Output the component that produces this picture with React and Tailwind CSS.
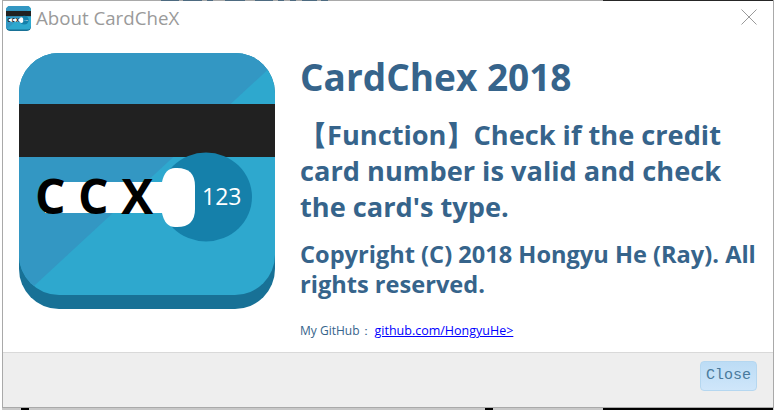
import React from "react";

// bits of the windows behind the dialog, [width, colour]
const topBits = [
  [159, "#a9a9a9"], [18, "#4d6a80"], [4, "#a9a9a9"], [19, "#4d6a80"], [5, "#a9a9a9"], [6, "#4d6a80"], [12, "#a9a9a9"], [20, "#4d6a80"],
  [10, "#a9a9a9"], [18, "#4d6a80"], [5, "#a9a9a9"], [6, "#4d6a80"], [6, "#a9a9a9"], [6, "#4d6a80"], [6, "#a9a9a9"], [15, "#4d6a80"],
  [4, "#a9a9a9"], [7, "#4d6a80"], [275, "#a9a9a9"], [170, "#262626"], [1, "#a9a9a9"],
];
const bottomBits = [
  [19, "#c8c8c8"], [8, "#000000"], [456, "#c8c8c8"], [8, "#000000"], [110, "#c8c8c8"], [170, "#000000"], [1, "#c8c8c8"],
];

const Strip = ({ bits, className }) => (
  <div className={`flex shrink-0 ${className}`}>
    {bits.map(([w, c], i) => (
      <div key={i} className="h-full" style={{ width: w, background: c }}></div>
    ))}
  </div>
);

const CardLogo = ({ size, small }) => (
  <svg width={size} height={size} viewBox="0 0 256 256" className="block shrink-0">
    <defs>
      <clipPath id={small ? "faceSmall" : "face"}>
        <rect x="0" y="0" width="256" height="242" rx="40" />
      </clipPath>
    </defs>
    <rect x="0" y="0" width="256" height="256" rx="40" fill="#187196" />
    <g clipPath={`url(#${small ? "faceSmall" : "face"})`}>
      <rect x="0" y="0" width="256" height="242" fill="#2ea8ce" />
      {/* darker diagonal */}
      <path d="M0 0H256V10L15 233L0 242Z" fill="#3397c3" />
    </g>
    <rect x="0" y="51" width="256" height="53" fill="#212121" />
    <ellipse cx="187" cy="144" rx="46" ry="44.5" fill="#1580aa" />
    <rect x="26" y="129" width="120" height="31" fill="#ffffff" />
    <path d="M156 115H158Q176 115 176 133V156Q176 174 158 174H156Q146 174 143 160V129Q146 115 156 115Z" fill="#ffffff" />
    <text x="183" y="152" fill="#ffffff" fontSize="23" fontFamily="'Open Sans', sans-serif">123</text>
    <text x="16" y="161" fill="#000000" fontSize="48" fontWeight="700" fontFamily="'Open Sans', sans-serif" letterSpacing="12.5">CCX</text>
  </svg>
);

export default function App() {
  return (
    <div className="w-[776px] h-[410px] bg-white font-['Open_Sans',sans-serif] pl-[2px] overflow-hidden flex flex-col">
      <Strip bits={topBits} className="h-[1px]" />
      <div className="w-[772px] h-[407px] shrink-0 flex flex-col border-x border-b border-[#a9a9a9] bg-white">
        {/* title bar */}
        <div className="h-[34px] flex items-center pl-[3px] pr-[16px] shrink-0">
          <div className="rounded-[4px] overflow-hidden">
            <CardLogo size={25} small />
          </div>
          <span className="ml-[5px] text-[18.7px] text-[#9a9a9a] leading-none">About CardCheX</span>
          <svg width="16" height="16" viewBox="0 0 16 16" className="ml-auto -mt-[2px]" fill="none" stroke="#9a9a9a" strokeWidth="1">
            <path d="M0.5 0.5L15.5 15.5M15.5 0.5L0.5 15.5" />
          </svg>
        </div>
        {/* content */}
        <div className="flex-1 flex pl-[16px] pt-[18px]">
          <CardLogo size={256} />
          <div className="ml-[25px] flex-1 text-[#36648b] font-bold">
            <h1 className="text-[37px] leading-[48px]">CardChex 2018</h1>
            <p className="text-[27.2px] leading-[36px] mt-[16px] w-[440px]">【Function】Check if the credit card number is valid and check the card's type.</p>
            <p className="text-[23.6px] leading-[30px] mt-[14px]">Copyright (C) 2018 Hongyu He (Ray). All rights reserved.</p>
            <p className="text-[12px] font-normal leading-[14px] mt-[25px]">
              My GitHub：<a href="#" className="ml-[3px] text-[#0000ff] underline text-[12.5px]">github.com/HongyuHe&gt;</a>
            </p>
          </div>
        </div>
        {/* footer */}
        <div className="h-[55px] shrink-0 bg-[#eeeeee] border-t border-[#d9d9d9] flex items-start justify-end pt-[8px] pr-[16px]">
          <button className="w-[57px] h-[30px] rounded-[4px] border border-[#b5d7f0] bg-linear-to-b from-[#bcdcf5] to-[#cfe6fa] text-[#4a7a9c] text-[15px] font-['Liberation_Mono',monospace]">Close</button>
        </div>
      </div>
      <Strip bits={bottomBits} className="h-[2px]" />
    </div>
  );
}
